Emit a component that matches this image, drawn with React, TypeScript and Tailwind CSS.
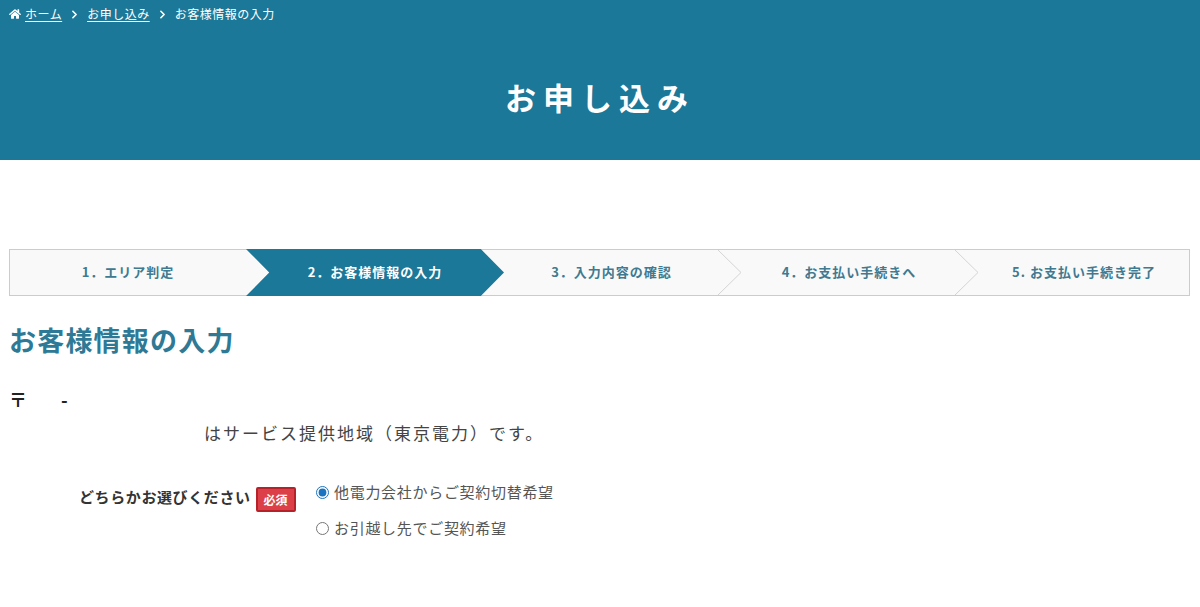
import { ChevronRight } from 'lucide-react';
import { FaHome } from 'react-icons/fa';

const font = { fontFamily: '"Noto Sans CJK JP", "Noto Sans", sans-serif' };

const steps = [
  { label: '1．エリア判定', width: 'w-[236px]', active: false },
  { label: '2．お客様情報の入力', width: 'w-[235px]', active: true },
  { label: '3．入力内容の確認', width: 'w-[238px]', active: false },
  { label: '4．お支払い手続きへ', width: 'w-[237px]', active: false },
  { label: '5. お支払い手続き完了', width: 'w-[233px]', active: false },
];

function Breadcrumb() {
  return (
    <div className="flex items-center pl-[9px] pt-[5px] text-[12px] leading-[18px] tracking-[0.5px] text-white">
      <FaHome className="w-[12px] h-[12px] mr-[4px]" />
      <a className="underline underline-offset-2">ホーム</a>
      <ChevronRight className="w-[13px] h-[13px] mx-[5px] ml-[6px]" strokeWidth={3} />
      <a className="underline underline-offset-2 ml-[1px]">お申し込み</a>
      <ChevronRight className="w-[13px] h-[13px] mx-[6px]" strokeWidth={3} />
      <span>お客様情報の入力</span>
    </div>
  );
}

function Steps() {
  return (
    <div className="flex h-[47px] w-[1181px] ml-[9px] border border-[#cccccc] bg-[#f9f9f9]">
      {steps.map((step, i) => (
        <div
          key={step.label}
          className={`relative flex items-center justify-center ${step.width} pb-[2px] text-[13px] font-bold tracking-[1px] ${i > 0 ? 'pl-[23px]' : ''} ${
            step.active ? 'text-white' : 'text-[#3f7a90]'
          }`}
        >
          {step.active && (
            <div className="absolute -top-px -bottom-px left-0 -right-[23px] bg-[#1b7899] [clip-path:polygon(0_0,91%_0,100%_50%,91%_100%,0_100%,9%_50%)]" />
          )}
          {i > 1 && i < 4 && (
            <svg className="absolute top-0 -right-[23px] w-[24px] h-[45px]" viewBox="0 0 24 45" fill="none">
              <path d="M0 0 L23 22.5 L0 45" stroke="#d4d4d4" />
            </svg>
          )}
          <span className="relative">{step.label}</span>
        </div>
      ))}
    </div>
  );
}

export default function App() {
  return (
    <div className="h-[607px] overflow-hidden bg-white" style={font}>
      <div className="h-[160px] bg-[#1b7899]">
        <Breadcrumb />
        <h1 className="pt-[52px] text-center text-[31px] leading-[44px] font-bold tracking-[7px] text-white">お申し込み</h1>
      </div>

      <div className="pt-[89px]">
        <Steps />
      </div>

      <div className="px-[9px]">
        <h2 className="mt-[24px] text-[27px] leading-[40px] font-bold tracking-[1.2px] text-[#2e7a96]">お客様情報の入力</h2>

        <div className="flex mt-[29px] h-[20px] items-center text-[18px] font-bold text-[#222222]">
          <span>〒</span>
          <span className="ml-[34px]">-</span>
        </div>

        <p className="mt-[11px] pl-[195px] text-[17px] leading-[26px] tracking-[2px] text-[#444444]">はサービス提供地域（東京電力）です。</p>

        <div className="flex mt-[41px]">
          <div className="flex items-start w-[307px] pl-[70px]">
            <span className="-mt-[2px] text-[15px] leading-[24px] font-bold tracking-[0.6px] text-[#333333] whitespace-nowrap">どちらかお選びください</span>
            <span className="ml-[5px] flex items-center justify-center w-[40px] h-[25px] shrink-0 rounded-[2px] border-2 border-[#b5222a] bg-[#dc3f48] text-[12px] font-bold text-white">必須</span>
          </div>
          <div className="-mt-[7px] flex flex-col gap-[12px] text-[15px] leading-[24px] tracking-[0.7px] text-[#555555]">
            <label className="flex items-center">
              <input type="radio" name="kind" defaultChecked className="w-[13px] h-[13px] accent-[#1a73c0]" />
              <span className="ml-[5px]">他電力会社からご契約切替希望</span>
            </label>
            <label className="flex items-center">
              <input type="radio" name="kind" className="w-[13px] h-[13px] accent-[#1a73c0]" />
              <span className="ml-[5px]">お引越し先でご契約希望</span>
            </label>
          </div>
        </div>
      </div>
    </div>
  );
}
